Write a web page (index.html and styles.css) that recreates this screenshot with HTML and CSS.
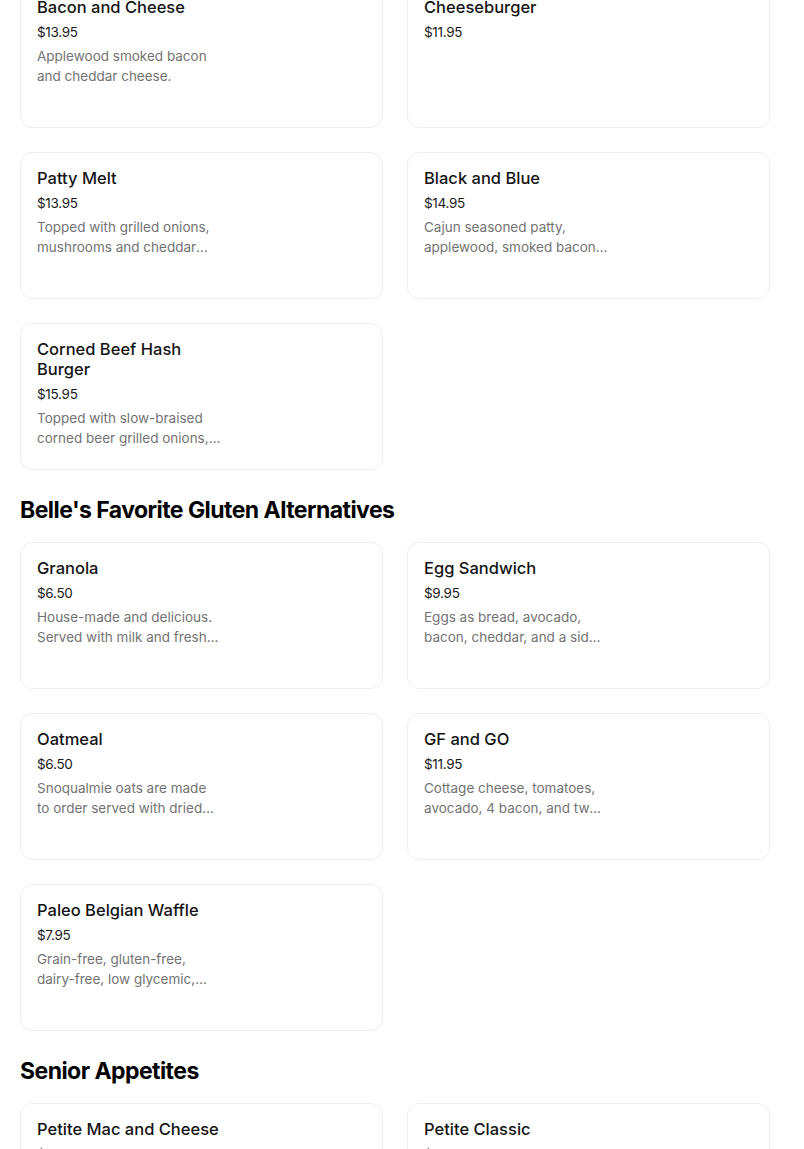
FILE: index.html
```html
<!DOCTYPE html>
<html>
<head>
<meta charset="utf-8">
<link rel="stylesheet" href="styles.css">
</head>
<body>
<main class="menu">
  <section class="section">
    <div class="grid">
      <div class="card"><div class="info"><div class="title">Bacon and Cheese</div><div class="price">$13.95</div><div class="desc">Applewood smoked bacon and cheddar cheese.</div></div></div>
      <div class="card"><div class="info"><div class="title">Cheeseburger</div><div class="price">$11.95</div></div></div>
      <div class="card"><div class="info"><div class="title">Patty Melt</div><div class="price">$13.95</div><div class="desc">Topped with grilled onions, mushrooms and cheddar cheese on grilled rye bread.</div></div></div>
      <div class="card"><div class="info"><div class="title">Black and Blue</div><div class="price">$14.95</div><div class="desc">Cajun seasoned patty, applewood, smoked bacon, and blue cheese crumbles.</div></div></div>
      <div class="card"><div class="info"><div class="title">Corned Beef Hash Burger</div><div class="price">$15.95</div><div class="desc">Topped with slow-braised corned beer grilled onions, and a fried egg.</div></div></div>
    </div>
  </section>
  <section class="section">
    <h2 class="heading">Belle's Favorite Gluten Alternatives</h2>
    <div class="grid">
      <div class="card"><div class="info"><div class="title">Granola</div><div class="price">$6.50</div><div class="desc">House-made and delicious. Served with milk and fresh fruit.</div></div></div>
      <div class="card"><div class="info"><div class="title">Egg Sandwich</div><div class="price">$9.95</div><div class="desc">Eggs as bread, avocado, bacon, cheddar, and a side of fruit.</div></div></div>
      <div class="card"><div class="info"><div class="title">Oatmeal</div><div class="price">$6.50</div><div class="desc">Snoqualmie oats are made to order served with dried fruit and brown sugar.</div></div></div>
      <div class="card"><div class="info"><div class="title">GF and GO</div><div class="price">$11.95</div><div class="desc">Cottage cheese, tomatoes, avocado, 4 bacon, and two eggs any style.</div></div></div>
      <div class="card"><div class="info"><div class="title">Paleo Belgian Waffle</div><div class="price">$7.95</div><div class="desc">Grain-free, gluten-free, dairy-free, low glycemic, served with berries.</div></div></div>
    </div>
  </section>
  <section class="section">
    <h2 class="heading">Senior Appetites</h2>
    <div class="grid">
      <div class="card"><div class="info"><div class="title">Petite Mac and Cheese</div><div class="price">$8.95</div><div class="desc">A smaller portion of our classic mac and cheese.</div></div></div>
      <div class="card"><div class="info"><div class="title">Petite Classic</div><div class="price">$8.95</div><div class="desc">One egg, bacon or sausage, and toast.</div></div></div>
    </div>
  </section>
</main>
</body>
</html>
```

FILE: styles.css
```css
html, body {
  margin: 0;
  padding: 0;
  background: #ffffff;
}

body {
  font-family: "Inter", "Liberation Sans", sans-serif;
  color: #000000;
  overflow: hidden;
}

.menu {
  margin-top: -19px;
  padding: 0 34px 40px 20px;
}

.heading {
  margin: 26px 0 18px;
  font-size: 23px;
  line-height: 28px;
  font-weight: 700;
  letter-spacing: -0.55px;
  color: #000000;
}

.grid {
  display: grid;
  grid-template-columns: 1fr 1fr;
  gap: 24px;
}

.card {
  box-sizing: border-box;
  height: 147px;
  border: 1px solid #efefef;
  border-radius: 12px;
  padding: 15px 16px;
  display: flex;
  background: #ffffff;
}

.info {
  width: 196px;
}

.title {
  font-size: 16.5px;
  line-height: 20px;
  font-weight: 500;
  color: #141414;
}

.price {
  margin-top: 5px;
  font-size: 13.5px;
  line-height: 20px;
  letter-spacing: -0.3px;
  color: #1a1a1a;
}

.desc {
  margin-top: 4px;
  max-width: 184px;
  font-size: 13.5px;
  line-height: 20px;
  color: #737373;
  display: -webkit-box;
  -webkit-line-clamp: 2;
  -webkit-box-orient: vertical;
  overflow: hidden;
}
```
